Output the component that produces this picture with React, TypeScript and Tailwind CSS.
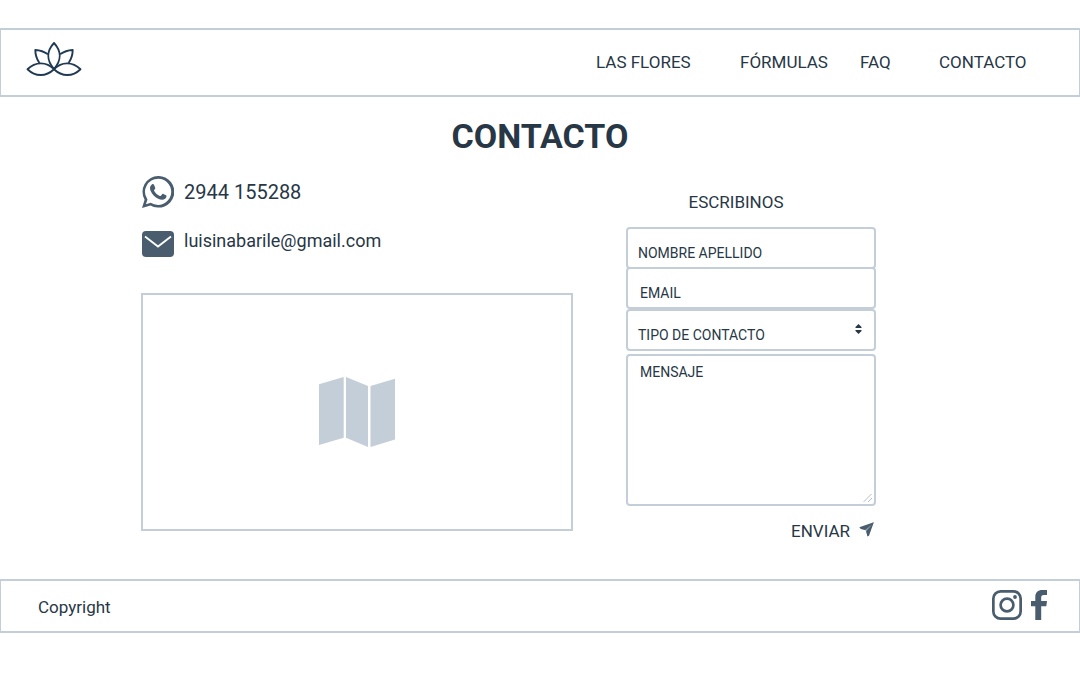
import React from "react";

const field =
  "peer block w-full rounded-[4px] border-2 border-[#c3ced9] bg-transparent px-[10px] text-[14px] leading-5 text-[#273746] outline-none focus:border-[#4a5d6e]";

const caption =
  "pointer-events-none absolute text-[14px] leading-5 peer-[:not(:placeholder-shown)]:invisible";

function Lotus() {
  return (
    <svg viewBox="0 0 56 36" className="h-9 w-14" fill="none" stroke="#1f3a52" strokeWidth="1.9" strokeLinejoin="round" aria-hidden="true">
      <path d="M28 27.200C20.500 18.500 20.500 9 28 1C35.500 9 35.500 18.500 28 27.200Z" />
      <path d="M22 12.300C18.200 9.600 13.800 8.200 9.300 8C9.300 12.500 10.700 17 13.400 21" />
      <path d="M34 12.300C37.800 9.600 42.200 8.200 46.700 8C46.700 12.500 45.300 17 42.600 21" />
      <path d="M28 27.200C20.500 19.500 9.500 19.300 1.500 27.200C9.500 35 20 34.800 28 27.200Z" />
      <path d="M28 27.200C35.500 19.500 46.500 19.300 54.500 27.200C46.500 35 36 34.800 28 27.200Z" />
    </svg>
  );
}

function WhatsApp() {
  return (
    <svg viewBox="0 0 32 32" className="size-8 shrink-0" fill="#4a5d6e" aria-hidden="true">
      <path
        fillRule="evenodd"
        d="M16.200 0A15.800 15.800 0 0 0 2.600 23.700L0 32L8.500 29.400A15.800 15.800 0 1 0 16.200 0ZM16.200 2.700A13.100 13.100 0 1 1 9.300 27L8.800 26.700L3.900 28.200L5.500 23.400L5.100 22.800A13.100 13.100 0 0 1 16.200 2.700Z"
      />
      <path d="M10.200 8.300C10.800 8 11.600 8 12 8.800L13.200 11.700C13.400 12.300 13.100 12.800 12.300 13.800C12 14.200 12 14.500 12.200 14.900C13.500 17.200 15.300 18.800 17.800 19.900C18.300 20.100 18.600 20.100 18.900 19.700L20.200 18.200C20.500 17.800 20.900 17.700 21.400 17.900L24 19.200C24.500 19.400 24.600 19.700 24.500 20.300C24.300 22.300 22.300 23.800 20.200 23.800C17.500 23.800 14 22 11.700 19.500C9.600 17.300 8 14.500 8 12.300C8 10.600 8.900 9 10.200 8.300Z" />
    </svg>
  );
}

function Envelope() {
  return (
    <svg viewBox="0 0 32 26" className="h-[26px] w-8 shrink-0" aria-hidden="true">
      <rect width="32" height="26" rx="4" fill="#4a5d6e" />
      <path d="M3 5.500L16 15.500L29 5.500" fill="none" stroke="#fff" strokeWidth="1.800" />
    </svg>
  );
}

function MapIcon() {
  return (
    <svg viewBox="0 0 76 70" className="h-[70px] w-[76px]" fill="#c3ced8" role="img" aria-label="Mapa">
      <path d="M0 7.300L24.700 0V60.700L0 68Z" />
      <path d="M27 0L49 9V70L27 60.700Z" />
      <path d="M51.500 9L76 1.800V62.500L51.500 70Z" />
    </svg>
  );
}

export default function App() {
  return (
    <div className="bg-white pt-7 font-['Roboto','Liberation_Sans',sans-serif] text-[#273746]">
      <header className="flex items-center justify-between border-x border-y-2 border-[#c3ced9] pt-3 pr-[57px] pb-[17px] pl-[25px]">
        <a href="#inicio" aria-label="Inicio">
          <Lotus />
        </a>
        <nav className="grid grid-cols-[144px_120px_79px_83px] pt-1 text-[17px] leading-6 whitespace-nowrap">
          <a href="#flores">LAS FLORES</a>
          <a href="#formulas">FÓRMULAS</a>
          <a href="#faq">FAQ</a>
          <a href="#contacto">CONTACTO</a>
        </nav>
      </header>

      <main id="contacto">
        <h1 className="pt-[19px] text-center text-[34px] leading-10 font-bold">CONTACTO</h1>
        <div className="flex gap-[53px] pt-5 pr-[204px] pl-[141px]">
          <section className="min-w-0 flex-1">
            <div className="flex items-center gap-[10px] pl-px text-[20px] leading-8">
              <WhatsApp />
              <span>2944 155288</span>
            </div>
            <div className="flex gap-[10px] pt-[23px] pl-px text-[18px] leading-5">
              <Envelope />
              <a href="mailto:luisinabarile@gmail.com">luisinabarile@gmail.com</a>
            </div>
            <div className="mt-9 flex h-[238px] items-center justify-center border-2 border-[#c3ced8]">
              <MapIcon />
            </div>
          </section>

          <form className="w-[250px] pt-[14px]" onSubmit={(e) => e.preventDefault()}>
            <h2 className="pr-[30px] text-center text-[17px] leading-6">ESCRIBINOS</h2>
            <div className="relative pt-[13px]">
              <input id="nombre" name="nombre" placeholder=" " className={`${field} h-[42px] pt-[10px]`} />
              <label htmlFor="nombre" className={`${caption} bottom-[6px] left-3`}>NOMBRE APELLIDO</label>
            </div>
            <div className="relative -mt-0.5">
              <input id="email" name="email" type="email" placeholder=" " className={`${field} h-[42px] pt-[10px]`} />
              <label htmlFor="email" className={`${caption} bottom-[6px] left-[14px]`}>EMAIL</label>
            </div>
            <div className="relative">
              <select id="tipo" name="tipo" required defaultValue="" className={`${field} h-[42px] appearance-none pt-[10px]`}>
                <option value="" />
                <option value="consulta">Consulta</option>
              </select>
              <label htmlFor="tipo" className="pointer-events-none absolute bottom-[6px] left-3 text-[14px] leading-5 peer-valid:invisible">TIPO DE CONTACTO</label>
              <svg viewBox="0 0 7 10" className="pointer-events-none absolute top-[15px] right-[14px] h-[10px] w-[7px]" fill="#273746" aria-hidden="true">
                <path d="M3.500 0L6.500 3V4H.5V3Z" />
                <path d="M3.500 10L6.500 7V6H.5V7Z" />
              </svg>
            </div>
            <div className="relative pt-[3px]">
              <textarea id="mensaje" name="mensaje" placeholder=" " className={`${field} h-[152px] resize-none pt-[6px]`} />
              <label htmlFor="mensaje" className={`${caption} top-[11px] left-[14px]`}>MENSAJE</label>
              <svg viewBox="0 0 10 10" className="pointer-events-none absolute right-[3px] bottom-[3px] size-[10px]" stroke="#b4c0cc" strokeWidth="1" aria-hidden="true">
                <path d="M.5 9L8.500 1M5 9L9 5" />
              </svg>
            </div>
            <div className="flex justify-end pt-[13px]">
              <button type="submit" className="flex items-center gap-[9px] pr-0.5 text-[17px] leading-6">
                ENVIAR
                <svg viewBox="0 0 15 15" className="mb-1 size-[15px]" fill="#4a5d6e" aria-hidden="true">
                  <path d="M14.800 .3L.3 5.200L1.800 7L6.300 8L13 2.500L7.200 9L8.400 14.500L10 13.800Z" />
                  <path d="M14.800 .3L2 6.800L6.500 8.300L8.500 14Z" opacity=".5" />
                </svg>
              </button>
            </div>
          </form>
        </div>
      </main>

      <footer className="mt-9 flex items-center justify-between border-x border-y-2 border-[#c3ced9] pt-[9px] pb-[11px] pr-8 pl-[37px]">
        <p className="pt-1 text-[17px] leading-6">Copyright</p>
        <div className="flex gap-[9px]">
          <a href="#instagram" aria-label="Instagram">
            <svg viewBox="0 0 30 30" className="size-[30px]" fill="none" stroke="#4a5d6e" strokeWidth="2.700" aria-hidden="true">
              <rect x="1.350" y="1.350" width="27.300" height="27.300" rx="7.200" />
              <circle cx="15" cy="15" r="6.400" />
              <circle cx="23" cy="7" r="1.900" fill="#4a5d6e" stroke="none" />
            </svg>
          </a>
          <a href="#facebook" aria-label="Facebook">
            <svg viewBox="0 0 16 30" className="h-[30px] w-4" fill="#4a5d6e" aria-hidden="true">
              <path d="M4.300 30V16.300H0V11H4.300V7C4.300 2.300 7 0 11.200 0H16V5H13C10.700 5 10.200 6 10.200 7.800V11H16L15.300 16.300H10.200V30Z" />
            </svg>
          </a>
        </div>
      </footer>
    </div>
  );
}
